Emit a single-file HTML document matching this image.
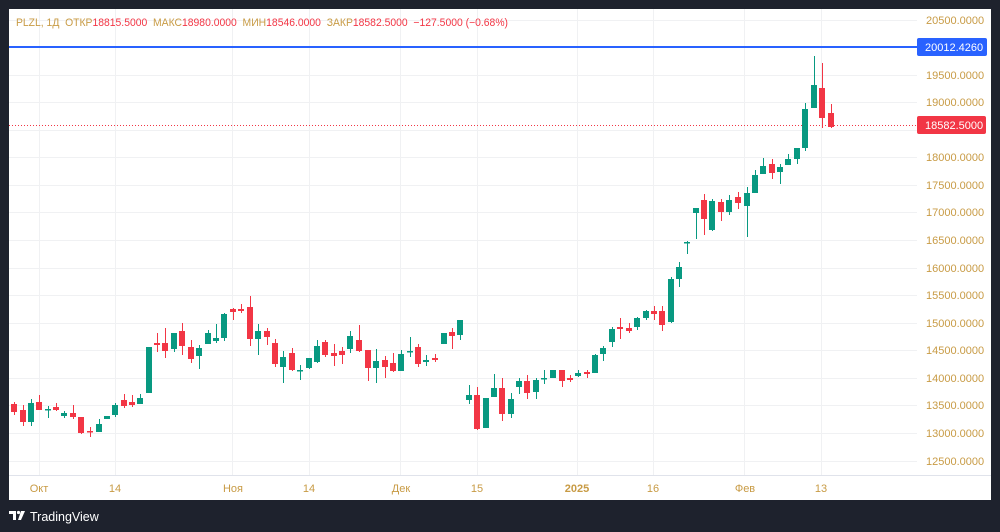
<!DOCTYPE html><html><head><meta charset="utf-8"><style>
body{margin:0;width:1000px;height:532px;background:#1e222d;overflow:hidden;font-family:"Liberation Sans",sans-serif}
svg{position:absolute;left:0;top:0}
.g line{stroke:#089981;stroke-width:1}.g rect{fill:#089981}
.r line{stroke:#f23645;stroke-width:1}.r rect{fill:#f23645}
.pre{white-space:pre}
</style></head><body>
<svg width="1000" height="532" viewBox="0 0 1000 532" font-family="Liberation Sans, sans-serif">
<rect x="9" y="9" width="982" height="491" fill="#fff"/>
<g stroke="#f0f1f3" stroke-width="1">
<line x1="9" x2="917" y1="20.5" y2="20.5"/><line x1="9" x2="917" y1="75.5" y2="75.5"/><line x1="9" x2="917" y1="102.5" y2="102.5"/><line x1="9" x2="917" y1="130.5" y2="130.5"/><line x1="9" x2="917" y1="157.5" y2="157.5"/><line x1="9" x2="917" y1="185.5" y2="185.5"/><line x1="9" x2="917" y1="212.5" y2="212.5"/><line x1="9" x2="917" y1="240.5" y2="240.5"/><line x1="9" x2="917" y1="268.5" y2="268.5"/><line x1="9" x2="917" y1="295.5" y2="295.5"/><line x1="9" x2="917" y1="323.5" y2="323.5"/><line x1="9" x2="917" y1="350.5" y2="350.5"/><line x1="9" x2="917" y1="378.5" y2="378.5"/><line x1="9" x2="917" y1="405.5" y2="405.5"/><line x1="9" x2="917" y1="433.5" y2="433.5"/><line x1="9" x2="917" y1="461.5" y2="461.5"/>
<line x1="39.5" x2="39.5" y1="9" y2="475"/><line x1="115.5" x2="115.5" y1="9" y2="475"/><line x1="232.5" x2="232.5" y1="9" y2="475"/><line x1="309.5" x2="309.5" y1="9" y2="475"/><line x1="400.5" x2="400.5" y1="9" y2="475"/><line x1="477.5" x2="477.5" y1="9" y2="475"/><line x1="577.5" x2="577.5" y1="9" y2="475"/><line x1="653.5" x2="653.5" y1="9" y2="475"/><line x1="744.5" x2="744.5" y1="9" y2="475"/><line x1="821.5" x2="821.5" y1="9" y2="475"/>
</g>
<line x1="9" x2="991" y1="475.5" y2="475.5" stroke="#e0e3eb"/>
<line x1="9" x2="917" y1="125.5" y2="125.5" stroke="#f23645" stroke-dasharray="1 2"/>
<line x1="9" x2="917" y1="47" y2="47" stroke="#2962ff" stroke-width="2"/>
<g class="r"><line x1="14.5" x2="14.5" y1="402" y2="415"/><rect x="11" y="404" width="6" height="8"/></g>
<g class="r"><line x1="23.5" x2="23.5" y1="405" y2="426"/><rect x="20" y="410" width="6" height="12"/></g>
<g class="g"><line x1="31.5" x2="31.5" y1="399" y2="426"/><rect x="28" y="403" width="6" height="19"/></g>
<g class="r"><line x1="39.5" x2="39.5" y1="395" y2="410"/><rect x="36" y="402" width="6" height="8"/></g>
<g class="g"><line x1="48.5" x2="48.5" y1="406" y2="418"/><rect x="45" y="409" width="6" height="1.5"/></g>
<g class="r"><line x1="56.5" x2="56.5" y1="403" y2="411"/><rect x="53" y="407" width="6" height="3"/></g>
<g class="g"><line x1="64.5" x2="64.5" y1="411" y2="418"/><rect x="61" y="413" width="6" height="3"/></g>
<g class="r"><line x1="73.5" x2="73.5" y1="405" y2="419"/><rect x="70" y="413" width="6" height="4"/></g>
<g class="r"><line x1="81.5" x2="81.5" y1="417" y2="434"/><rect x="78" y="417" width="6" height="16"/></g>
<g class="r"><line x1="90.5" x2="90.5" y1="427" y2="437"/><rect x="87" y="431" width="6" height="1.5"/></g>
<g class="g"><line x1="99.5" x2="99.5" y1="419" y2="432"/><rect x="96" y="424" width="6" height="8"/></g>
<g class="g"><line x1="107.5" x2="107.5" y1="416" y2="419"/><rect x="104" y="416" width="6" height="3"/></g>
<g class="g"><line x1="115.5" x2="115.5" y1="403" y2="417"/><rect x="112" y="405" width="6" height="10"/></g>
<g class="r"><line x1="124.5" x2="124.5" y1="394" y2="408"/><rect x="121" y="400" width="6" height="6"/></g>
<g class="r"><line x1="132.5" x2="132.5" y1="395" y2="407"/><rect x="129" y="402" width="6" height="3"/></g>
<g class="g"><line x1="140.5" x2="140.5" y1="394" y2="404"/><rect x="137" y="398" width="6" height="6"/></g>
<g class="g"><line x1="149.5" x2="149.5" y1="347" y2="393"/><rect x="146" y="347" width="6" height="46"/></g>
<g class="r"><line x1="157.5" x2="157.5" y1="333" y2="352"/><rect x="154" y="343" width="6" height="2"/></g>
<g class="r"><line x1="165.5" x2="165.5" y1="328" y2="358"/><rect x="162" y="343" width="6" height="8"/></g>
<g class="g"><line x1="174.5" x2="174.5" y1="333" y2="352"/><rect x="171" y="333" width="6" height="16"/></g>
<g class="r"><line x1="182.5" x2="182.5" y1="323" y2="355"/><rect x="179" y="331" width="6" height="15"/></g>
<g class="r"><line x1="191.5" x2="191.5" y1="340" y2="363"/><rect x="188" y="347" width="6" height="12"/></g>
<g class="g"><line x1="199.5" x2="199.5" y1="345" y2="369"/><rect x="196" y="348" width="6" height="8"/></g>
<g class="g"><line x1="208.5" x2="208.5" y1="330" y2="344"/><rect x="205" y="333" width="6" height="11"/></g>
<g class="g"><line x1="216.5" x2="216.5" y1="324" y2="343"/><rect x="213" y="338" width="6" height="3"/></g>
<g class="g"><line x1="224.5" x2="224.5" y1="313" y2="341"/><rect x="221" y="314" width="6" height="24"/></g>
<g class="r"><line x1="233.5" x2="233.5" y1="308" y2="320"/><rect x="230" y="309" width="6" height="3"/></g>
<g class="r"><line x1="241.5" x2="241.5" y1="304" y2="313"/><rect x="238" y="309" width="6" height="2"/></g>
<g class="r"><line x1="250.5" x2="250.5" y1="296" y2="346"/><rect x="247" y="307" width="6" height="32"/></g>
<g class="g"><line x1="258.5" x2="258.5" y1="324" y2="355"/><rect x="255" y="331" width="6" height="8"/></g>
<g class="r"><line x1="267.5" x2="267.5" y1="328" y2="345"/><rect x="264" y="331" width="6" height="6"/></g>
<g class="r"><line x1="275.5" x2="275.5" y1="339" y2="367"/><rect x="272" y="343" width="6" height="21"/></g>
<g class="g"><line x1="283.5" x2="283.5" y1="351" y2="383"/><rect x="280" y="357" width="6" height="10"/></g>
<g class="r"><line x1="292.5" x2="292.5" y1="348" y2="371"/><rect x="289" y="353" width="6" height="17"/></g>
<g class="g"><line x1="300.5" x2="300.5" y1="365" y2="380"/><rect x="297" y="370" width="6" height="1.5"/></g>
<g class="g"><line x1="309.5" x2="309.5" y1="358" y2="369"/><rect x="306" y="358" width="6" height="10"/></g>
<g class="g"><line x1="317.5" x2="317.5" y1="340" y2="363"/><rect x="314" y="346" width="6" height="16"/></g>
<g class="r"><line x1="325.5" x2="325.5" y1="340" y2="357"/><rect x="322" y="342" width="6" height="13"/></g>
<g class="r"><line x1="334.5" x2="334.5" y1="344" y2="366"/><rect x="331" y="353" width="6" height="3"/></g>
<g class="r"><line x1="342.5" x2="342.5" y1="347" y2="364"/><rect x="339" y="351" width="6" height="4"/></g>
<g class="g"><line x1="350.5" x2="350.5" y1="331" y2="353"/><rect x="347" y="336" width="6" height="13"/></g>
<g class="r"><line x1="359.5" x2="359.5" y1="325" y2="352"/><rect x="356" y="340" width="6" height="11"/></g>
<g class="r"><line x1="368.5" x2="368.5" y1="350" y2="381"/><rect x="365" y="350" width="6" height="18"/></g>
<g class="g"><line x1="376.5" x2="376.5" y1="349" y2="383"/><rect x="373" y="361" width="6" height="7"/></g>
<g class="r"><line x1="385.5" x2="385.5" y1="356" y2="378"/><rect x="382" y="360" width="6" height="7"/></g>
<g class="r"><line x1="393.5" x2="393.5" y1="353" y2="372"/><rect x="390" y="363" width="6" height="8"/></g>
<g class="g"><line x1="401.5" x2="401.5" y1="350" y2="371"/><rect x="398" y="354" width="6" height="17"/></g>
<g class="g"><line x1="410.5" x2="410.5" y1="337" y2="357"/><rect x="407" y="351" width="6" height="1.5"/></g>
<g class="r"><line x1="418.5" x2="418.5" y1="344" y2="367"/><rect x="415" y="347" width="6" height="17"/></g>
<g class="g"><line x1="426.5" x2="426.5" y1="355" y2="366"/><rect x="423" y="360" width="6" height="2"/></g>
<g class="r"><line x1="435.5" x2="435.5" y1="354" y2="362"/><rect x="432" y="358" width="6" height="2"/></g>
<g class="g"><line x1="444.5" x2="444.5" y1="333" y2="344"/><rect x="441" y="333" width="6" height="11"/></g>
<g class="r"><line x1="452.5" x2="452.5" y1="328" y2="349"/><rect x="449" y="332" width="6" height="4"/></g>
<g class="g"><line x1="460.5" x2="460.5" y1="320" y2="340"/><rect x="457" y="320" width="6" height="15"/></g>
<g class="g"><line x1="469.5" x2="469.5" y1="385" y2="404"/><rect x="466" y="395" width="6" height="5"/></g>
<g class="r"><line x1="477.5" x2="477.5" y1="387" y2="430"/><rect x="474" y="395" width="6" height="34"/></g>
<g class="g"><line x1="486.5" x2="486.5" y1="398" y2="428"/><rect x="483" y="398" width="6" height="30"/></g>
<g class="g"><line x1="494.5" x2="494.5" y1="374" y2="397"/><rect x="491" y="388" width="6" height="9"/></g>
<g class="r"><line x1="502.5" x2="502.5" y1="378" y2="421"/><rect x="499" y="388" width="6" height="26"/></g>
<g class="g"><line x1="511.5" x2="511.5" y1="393" y2="418"/><rect x="508" y="399" width="6" height="15"/></g>
<g class="g"><line x1="519.5" x2="519.5" y1="378" y2="394"/><rect x="516" y="381" width="6" height="6"/></g>
<g class="r"><line x1="527.5" x2="527.5" y1="375" y2="399"/><rect x="524" y="381" width="6" height="12"/></g>
<g class="g"><line x1="536.5" x2="536.5" y1="378" y2="399"/><rect x="533" y="380" width="6" height="12"/></g>
<g class="g"><line x1="544.5" x2="544.5" y1="370" y2="384"/><rect x="541" y="378" width="6" height="1.5"/></g>
<g class="g"><line x1="553.5" x2="553.5" y1="370" y2="378"/><rect x="550" y="370" width="6" height="8"/></g>
<g class="r"><line x1="562.5" x2="562.5" y1="370" y2="387"/><rect x="559" y="370" width="6" height="11"/></g>
<g class="r"><line x1="570.5" x2="570.5" y1="375" y2="382"/><rect x="567" y="378" width="6" height="2"/></g>
<g class="g"><line x1="578.5" x2="578.5" y1="370" y2="377"/><rect x="575" y="373" width="6" height="3"/></g>
<g class="r"><line x1="587.5" x2="587.5" y1="370" y2="378"/><rect x="584" y="372" width="6" height="2"/></g>
<g class="g"><line x1="595.5" x2="595.5" y1="354" y2="373"/><rect x="592" y="355" width="6" height="18"/></g>
<g class="g"><line x1="603.5" x2="603.5" y1="346" y2="361"/><rect x="600" y="348" width="6" height="6"/></g>
<g class="g"><line x1="612.5" x2="612.5" y1="327" y2="347"/><rect x="609" y="329" width="6" height="13"/></g>
<g class="r"><line x1="620.5" x2="620.5" y1="318" y2="339"/><rect x="617" y="327" width="6" height="2"/></g>
<g class="r"><line x1="629.5" x2="629.5" y1="323" y2="333"/><rect x="626" y="328" width="6" height="3"/></g>
<g class="g"><line x1="637.5" x2="637.5" y1="317" y2="330"/><rect x="634" y="318" width="6" height="9"/></g>
<g class="g"><line x1="646.5" x2="646.5" y1="310" y2="320"/><rect x="643" y="311" width="6" height="7"/></g>
<g class="r"><line x1="654.5" x2="654.5" y1="306" y2="320"/><rect x="651" y="311" width="6" height="3"/></g>
<g class="r"><line x1="662.5" x2="662.5" y1="306" y2="331"/><rect x="659" y="311" width="6" height="14"/></g>
<g class="g"><line x1="671.5" x2="671.5" y1="277" y2="323"/><rect x="668" y="279" width="6" height="43"/></g>
<g class="g"><line x1="679.5" x2="679.5" y1="262" y2="287"/><rect x="676" y="267" width="6" height="12"/></g>
<g class="g"><line x1="687.5" x2="687.5" y1="241" y2="254"/><rect x="684" y="242" width="6" height="1.5"/></g>
<g class="g"><line x1="696.5" x2="696.5" y1="208" y2="239"/><rect x="693" y="208" width="6" height="5"/></g>
<g class="r"><line x1="704.5" x2="704.5" y1="194" y2="235"/><rect x="701" y="200" width="6" height="19"/></g>
<g class="g"><line x1="712.5" x2="712.5" y1="199" y2="231"/><rect x="709" y="201" width="6" height="29"/></g>
<g class="r"><line x1="721.5" x2="721.5" y1="199" y2="221"/><rect x="718" y="202" width="6" height="10"/></g>
<g class="g"><line x1="729.5" x2="729.5" y1="195" y2="215"/><rect x="726" y="200" width="6" height="12"/></g>
<g class="r"><line x1="738.5" x2="738.5" y1="192" y2="209"/><rect x="735" y="197" width="6" height="6"/></g>
<g class="g"><line x1="747.5" x2="747.5" y1="187" y2="237"/><rect x="744" y="193" width="6" height="13"/></g>
<g class="g"><line x1="755.5" x2="755.5" y1="170" y2="193"/><rect x="752" y="175" width="6" height="18"/></g>
<g class="g"><line x1="763.5" x2="763.5" y1="158" y2="174"/><rect x="760" y="166" width="6" height="8"/></g>
<g class="r"><line x1="772.5" x2="772.5" y1="159" y2="179"/><rect x="769" y="164" width="6" height="9"/></g>
<g class="g"><line x1="780.5" x2="780.5" y1="164" y2="184"/><rect x="777" y="167" width="6" height="5"/></g>
<g class="g"><line x1="788.5" x2="788.5" y1="154" y2="165"/><rect x="785" y="159" width="6" height="6"/></g>
<g class="g"><line x1="797.5" x2="797.5" y1="148" y2="164"/><rect x="794" y="148" width="6" height="11"/></g>
<g class="g"><line x1="805.5" x2="805.5" y1="103" y2="151"/><rect x="802" y="109" width="6" height="39"/></g>
<g class="g"><line x1="814.5" x2="814.5" y1="56" y2="108"/><rect x="811" y="85" width="6" height="23"/></g>
<g class="r"><line x1="822.5" x2="822.5" y1="63" y2="128"/><rect x="819" y="88" width="6" height="30"/></g>
<g class="r"><line x1="831.5" x2="831.5" y1="104" y2="128"/><rect x="828" y="113" width="6" height="14"/></g>
<g fill="#c89b45" font-size="11">
<text x="926" y="24">20500.0000</text><text x="926" y="79">19500.0000</text><text x="926" y="106">19000.0000</text><text x="926" y="161">18000.0000</text><text x="926" y="189">17500.0000</text><text x="926" y="216">17000.0000</text><text x="926" y="244">16500.0000</text><text x="926" y="272">16000.0000</text><text x="926" y="299">15500.0000</text><text x="926" y="327">15000.0000</text><text x="926" y="354">14500.0000</text><text x="926" y="382">14000.0000</text><text x="926" y="409">13500.0000</text><text x="926" y="437">13000.0000</text><text x="926" y="465">12500.0000</text>
</g>
<rect x="917" y="38" width="70" height="18" rx="2" fill="#2962ff"/>
<text x="925" y="51" fill="#fff" font-size="11">20012.4260</text>
<rect x="917" y="116" width="69" height="18" rx="2" fill="#f23645"/>
<text x="925" y="129" fill="#fff" font-size="11">18582.5000</text>
<g fill="#c89b45" font-size="11" text-anchor="middle">
<text x="39" y="492">Окт</text><text x="115" y="492">14</text><text x="233" y="492">Ноя</text><text x="309" y="492">14</text><text x="401" y="492">Дек</text><text x="477" y="492">15</text><text x="577" y="492" font-weight="bold">2025</text><text x="653" y="492">16</text><text x="745" y="492">Фев</text><text x="821" y="492">13</text>
</g>
<text class="pre" x="16" y="26" font-size="11" fill="#c89b45" textLength="492" lengthAdjust="spacingAndGlyphs">PLZL, 1Д  ОТКР<tspan fill="#f23645">18815.5000</tspan>  МАКС<tspan fill="#f23645">18980.0000</tspan>  МИН<tspan fill="#f23645">18546.0000</tspan>  ЗАКР<tspan fill="#f23645">18582.5000  −127.5000 (−0.68%)</tspan></text>
<g fill="#fff"><path d="M9 511h7v9h-3v-6h-4z"/><circle cx="18.5" cy="512.5" r="1.6"/><path d="M21 511h4l-4 9h-3z"/></g>
<text x="30" y="521" fill="#fff" font-size="12.5">TradingView</text>
</svg>
</body></html>
